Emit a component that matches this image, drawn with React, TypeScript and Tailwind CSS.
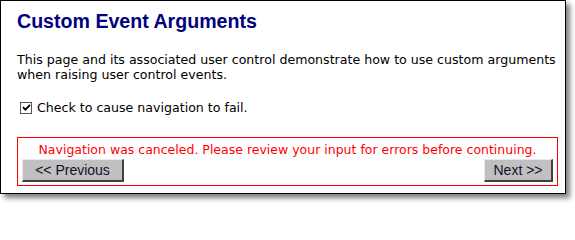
export default function App() {
  return (
    <div className="w-[575px] h-[207px] bg-white">
      <div className="w-[566px] h-[194px] border border-black bg-white shadow-[4px_4px_5px_rgba(0,0,0,0.5)] pl-4 pr-2 pt-[8px]">
        <h1 className="font-['Liberation_Sans',Arial,sans-serif] font-bold text-[19.6px] leading-[24px] text-[#000080]">
          Custom Event Arguments
        </h1>
        <p className="mt-[19px] font-['DejaVu_Sans',Verdana,sans-serif] text-[12.6px] leading-[15px] text-black">
          This page and its associated user control demonstrate how to use custom arguments when raising user control events.
        </p>
        <label className="mt-[18px] ml-[3px] flex items-center gap-[5px] font-['DejaVu_Sans',Verdana,sans-serif] text-[12.6px] leading-[15px] text-black">
          <span className="w-[12px] h-[12px] border border-[#555] bg-white flex items-center justify-center">
            <svg width="9" height="9" viewBox="0 0 9 9">
              <path d="M1 4.2 L3.4 6.6 L8 1.8" fill="none" stroke="#000" strokeWidth="1.8" />
            </svg>
          </span>
          Check to cause navigation to fail.
        </label>
        <div className="mt-[22px] w-[541px] h-[49px] border border-solid border-[color:#ff0000] text-[#ff0000] px-1 pt-[3px]">
          <p className="text-center font-['DejaVu_Sans',Verdana,sans-serif] text-[12.5px] leading-[18px]">
            Navigation was canceled. Please review your input for errors before continuing.
          </p>
          <div className="flex justify-between items-start">
            <button className="w-[102px] h-[23px] bg-[#c0c0c0] border-t border-l border-t-[#e8e8e8] border-l-[#e8e8e8] border-b-2 border-r-2 border-b-[#404040] border-r-[#404040] font-['Liberation_Sans',Arial,sans-serif] text-[14px] text-[#10102a]">
              &lt;&lt; Previous
            </button>
            <button className="w-[69px] h-[23px] bg-[#c0c0c0] border-t border-l border-t-[#e8e8e8] border-l-[#e8e8e8] border-b-2 border-r-2 border-b-[#404040] border-r-[#404040] font-['Liberation_Sans',Arial,sans-serif] text-[14px] text-[#10102a]">
              Next &gt;&gt;
            </button>
          </div>
        </div>
      </div>
    </div>
  );
}
